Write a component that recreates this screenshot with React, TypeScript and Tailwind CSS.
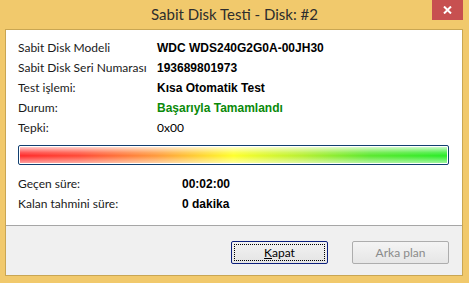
export default function App() {
  const info = [
    { label: "Sabit Disk Modeli", value: "WDC WDS240G2G0A-00JH30", kind: "bold" },
    { label: "Sabit Disk Seri Numarası", value: "193689801973", kind: "bold" },
    { label: "Test işlemi:", value: "Kısa Otomatik Test", kind: "bold" },
    { label: "Durum:", value: "Başarıyla Tamamlandı", kind: "green" },
    { label: "Tepki:", value: "0x00", kind: "plain" },
  ];

  return (
    <div className="flex h-[283px] w-[469px] flex-col bg-[#f1c96c] font-['Lato','Noto_Sans',sans-serif]">
      {/* title bar */}
      <div className="relative flex h-[29px] shrink-0 items-center justify-center">
        <span className="text-[15px] text-[#2d2d2d]">Sabit Disk Testi - Disk: #2</span>
        <div className="absolute right-[6px] top-0 flex h-[20px] w-[31px] items-center justify-center bg-[#c75050]">
          <svg width="9" height="8" viewBox="0 0 9 8">
            <path d="M1 0.5 L8 7.5 M8 0.5 L1 7.5" stroke="#ffffff" strokeWidth="2" />
          </svg>
        </div>
      </div>

      {/* client area */}
      <div className="mb-[7px] ml-[5px] mr-[6px] flex flex-1 flex-col border border-[#c9a653]">
        <div className="flex flex-1 flex-col bg-white pl-[12px] pt-[8px]">
          {info.map((row) => (
            <div key={row.label} className="flex h-[20px] items-center text-[12px]">
              <span className="w-[139px] text-[#1a1a1a]">{row.label}</span>
              <span
                className={
                  row.kind === "bold"
                    ? "font-['Liberation_Sans',sans-serif] font-bold text-black"
                    : row.kind === "green"
                      ? "font-['Liberation_Sans',sans-serif] font-bold text-[#0a8a0a]"
                      : "text-black"
                }
              >
                {row.value}
              </span>
            </div>
          ))}

          <div className="mt-[7px] h-[20px] w-[431px] rounded-[2px] border border-[#123f70] bg-white p-[1px]">
            <div className="relative h-full w-full bg-[linear-gradient(to_right,#ff2b2b_0%,#ff4a35_14%,#ff9a3a_32%,#ffff2a_50%,#b8f030_66%,#5ae82e_82%,#28ec28_100%)]">
              <div className="absolute inset-0 bg-[linear-gradient(to_bottom,rgba(255,255,255,0.75)_0%,rgba(255,255,255,0.2)_35%,rgba(255,255,255,0)_55%,rgba(255,255,255,0.55)_100%)]" />
            </div>
          </div>

          <div className="mt-[9px] flex h-[20px] items-center text-[12px]">
            <span className="w-[164px] text-[#1a1a1a]">Geçen süre:</span>
            <span className="font-['Liberation_Sans',sans-serif] font-bold text-black">00:02:00</span>
          </div>
          <div className="flex h-[20px] items-center text-[12px]">
            <span className="w-[164px] text-[#1a1a1a]">Kalan tahmini süre:</span>
            <span className="font-['Liberation_Sans',sans-serif] font-bold text-black">0 dakika</span>
          </div>
        </div>

        <div className="flex h-[50px] shrink-0 justify-end gap-[24px] border-t border-[#a6a6a6] bg-[#f0f0f0] pr-[13px] pt-[15px]">
          <button className="h-[23px] w-[97px] rounded-[2px] border border-[#0c1f7c] bg-[linear-gradient(to_bottom,#f2f2f2,#e4e4e4)] p-[2px]">
            <div className="flex h-full w-full items-center justify-center border border-dotted border-black text-[12px] text-black">
              <span><span className="underline">K</span>apat</span>
            </div>
          </button>
          <button className="flex h-[23px] w-[97px] items-center justify-center rounded-[2px] border border-[#adadad] bg-[linear-gradient(to_bottom,#f4f4f4,#e6e6e6)] text-[12px] text-[#8a8a8a]">
            Arka plan
          </button>
        </div>
      </div>
    </div>
  );
}
